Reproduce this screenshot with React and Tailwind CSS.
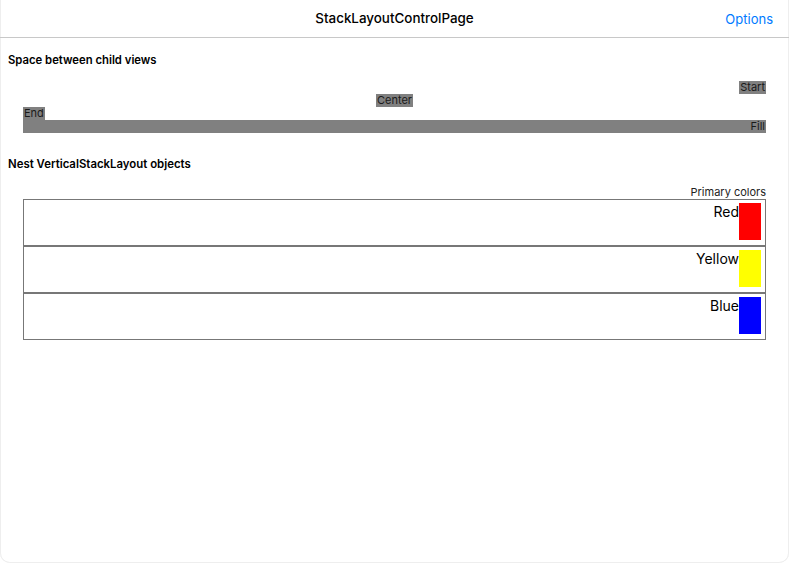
const colors = [
  { name: "Red", swatch: "bg-[#ff0000]" },
  { name: "Yellow", swatch: "bg-[#ffff00]" },
  { name: "Blue", swatch: "bg-[#0000ff]" },
];

const App = () => {
  return (
    <div
      className="h-[563px] w-[789px] bg-white text-black overflow-hidden rounded-b-[10px] shadow-[inset_1px_0_0_#eeeeee,inset_-1px_0_0_#eeeeee,inset_0_-1px_0_#eeeeee]"
      style={{ fontFamily: 'Inter, "Liberation Sans", sans-serif' }}
    >
      {/* nav bar */}
      <header className="relative h-[38px] flex items-center justify-center border-b border-[#c8c8c8]">
        <h1 className="text-[13.4px] font-medium">StackLayoutControlPage</h1>
        <button className="absolute right-[16px] top-[10px] text-[13px] text-[#007aff]">Options</button>
      </header>

      <section className="pt-[15px]">
        <h2 className="px-[8px] text-[11.3px] font-semibold leading-[14px]">Space between child views</h2>

        <div className="mt-[14px] px-[23px] flex flex-col text-[11px] leading-[13px] text-[#1a1a1a]">
          <div className="flex justify-end">
            <span className="bg-[#808080] px-[1px]">Start</span>
          </div>
          <div className="flex justify-center">
            <span className="bg-[#808080] px-[1px]">Center</span>
          </div>
          <div className="flex justify-start">
            <span className="bg-[#808080] px-[1px]">End</span>
          </div>
          <div className="bg-[#808080] text-right px-[1px]">Fill</div>
        </div>
      </section>

      <section className="pt-[24px]">
        <h2 className="px-[8px] text-[11.4px] font-semibold leading-[14px]">Nest VerticalStackLayout objects</h2>

        <div className="mt-[15px] px-[23px]">
          <p className="text-right text-[11px] leading-[13px] text-[#222]">Primary colors</p>
          <div className="flex flex-col">
            {colors.map((c) => (
              <div
                key={c.name}
                className="h-[47px] border border-[#777] flex justify-end items-start pt-[3px] pr-[4px]"
              >
                <span className="text-[14px] leading-[17px]">{c.name}</span>
                <div className={`w-[22px] h-[37px] ${c.swatch}`} />
              </div>
            ))}
          </div>
        </div>
      </section>
    </div>
  );
};

export default App;
